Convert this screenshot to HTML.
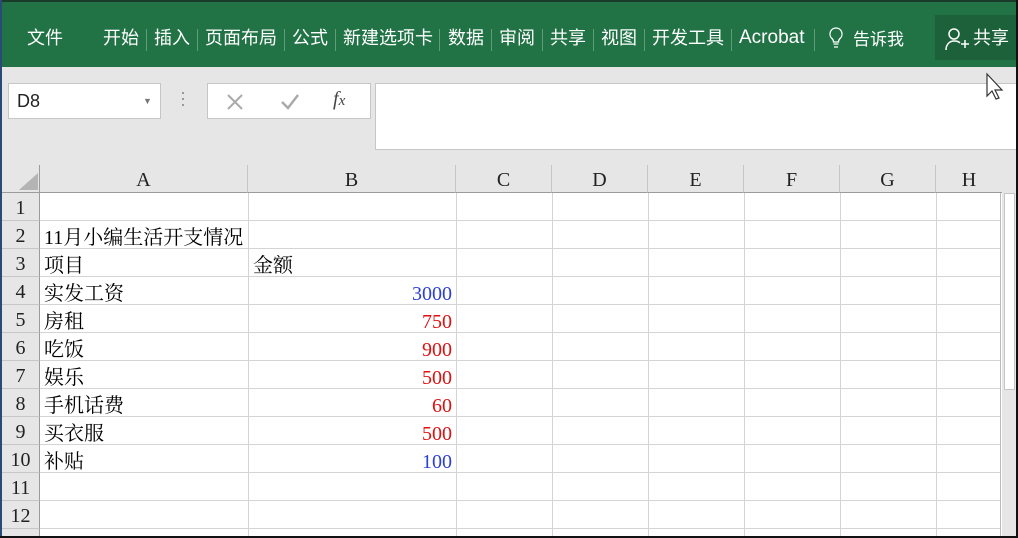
<!DOCTYPE html>
<html><head><meta charset="utf-8"><style>
*{margin:0;padding:0;box-sizing:border-box}
body{width:1018px;height:538px;overflow:hidden;background:#fff;position:relative;font-family:"Liberation Sans","Noto Sans CJK SC",sans-serif}
.a{position:absolute}
#rib{left:0;top:0;width:1018px;height:67px;background:#217346;border-top:2px solid #1a3a2a;border-left:2px solid #2a4a7a}
.t{position:absolute;top:24px;color:#fff;font-size:18px;line-height:24px;white-space:nowrap}
.sep{position:absolute;top:27px;width:1px;height:22px;background:#5f9c7a}
#fb{left:0;top:67px;width:1018px;height:98px;background:#e6e6e6;border-left:2px solid #2a4a7a}
.box{position:absolute;background:#fff;border:1px solid #c6c6c6}
.ch{position:absolute;top:165px;height:28px;background:#e6e6e6;border-right:1px solid #c6c6c6;border-bottom:1px solid #9b9b9b;font-family:"Liberation Serif",serif;font-size:20px;text-align:center;line-height:30px;color:#222}
.rh{position:absolute;left:2px;width:38px;height:28px;background:#e6e6e6;border-bottom:1px solid #c6c6c6;border-right:1px solid #9b9b9b;font-family:"Liberation Serif",serif;font-size:20px;text-align:center;line-height:30px;color:#222}
.hl{position:absolute;left:40px;width:960px;height:1px;background:#d4d4d4}
.vl{position:absolute;top:193px;width:1px;height:345px;background:#d4d4d4}
.c{position:absolute;font-family:"Liberation Serif","Noto Serif CJK SC",serif;font-size:20px;line-height:28px;white-space:nowrap;color:#000;margin-top:2px}
.n{text-align:right;width:200px;left:252px}
</style></head><body>
<div id="rib" class="a">
<div class="t" style="left:25px">文件</div>
<div class="t" style="left:101px">开始</div><div class="sep" style="left:144px"></div>
<div class="t" style="left:152px">插入</div><div class="sep" style="left:195px"></div>
<div class="t" style="left:203px">页面布局</div><div class="sep" style="left:282px"></div>
<div class="t" style="left:290px">公式</div><div class="sep" style="left:333px"></div>
<div class="t" style="left:341px">新建选项卡</div><div class="sep" style="left:437px"></div>
<div class="t" style="left:446px">数据</div><div class="sep" style="left:489px"></div>
<div class="t" style="left:497px">审阅</div><div class="sep" style="left:540px"></div>
<div class="t" style="left:548px">共享</div><div class="sep" style="left:591px"></div>
<div class="t" style="left:599px">视图</div><div class="sep" style="left:642px"></div>
<div class="t" style="left:650px">开发工具</div><div class="sep" style="left:729px"></div>
<div class="t" style="left:737px;font-size:19px">Acrobat</div><div class="sep" style="left:812px"></div>
<svg class="a" style="left:826px;top:24px" width="16" height="24" viewBox="0 0 16 24"><path d="M8 2a6 6 0 0 0-4 10.5c1 1 1.5 2 1.5 3.5h5c0-1.5.5-2.5 1.5-3.5A6 6 0 0 0 8 2zM5.5 18h5M6 21h4" fill="none" stroke="#fff" stroke-width="1.3"/></svg>
<div class="t" style="left:851px;top:26px;font-size:17px">告诉我</div>
<div class="a" style="left:933px;top:13px;width:85px;height:45px;background:#1c6139"></div>
<svg class="a" style="left:942px;top:24px" width="26" height="26" viewBox="0 0 26 26"><circle cx="10" cy="8" r="5" fill="none" stroke="#fff" stroke-width="1.5"/><path d="M2 24c0-6 4-9 8-9s5 1 6 2M17 18h8M21 14v8" fill="none" stroke="#fff" stroke-width="1.5"/></svg>
<div class="t" style="left:971px">共享</div>
</div>
<div id="fb" class="a">
<div class="box" style="left:6px;top:16px;width:153px;height:36px;font-size:18px;line-height:34px;padding-left:8px;color:#222">D8<span style="position:absolute;left:134px;top:0;font-size:9px;color:#777">▼</span></div>
<div class="a" style="left:180px;top:25px;width:2px;height:2px;background:#999;box-shadow:0 6px #999,0 12px #999"></div>
<div class="box" style="left:205px;top:16px;width:164px;height:36px">
<svg class="a" style="left:18px;top:9px" width="18" height="18"><path d="M2 2l14 14M16 2L2 16" stroke="#aaa" stroke-width="2"/></svg>
<svg class="a" style="left:72px;top:9px" width="20" height="18"><path d="M2 9l6 6L18 2" fill="none" stroke="#aaa" stroke-width="2.5"/></svg>
<div class="a" style="left:125px;top:4px;font-family:'Liberation Serif',serif;font-style:italic;font-size:20px;color:#444">f<span style="font-size:15px">x</span></div>
</div>
<div class="box" style="left:373px;top:16px;width:645px;height:67px;border-right:none"></div>
<svg class="a" style="left:983px;top:5px" width="20" height="30"><path d="M2 2v22l5-5 4 8 3-1-4-8h7z" fill="#fff" stroke="#333" stroke-width="1.2"/></svg>
</div>
<div class="a" style="left:2px;top:165px;width:38px;height:28px;background:#e6e6e6;border-right:1px solid #9b9b9b;border-bottom:1px solid #9b9b9b"><svg width="38" height="28"><path d="M17 25h19V8z" fill="#b4b4b4"/></svg></div>
<div class="ch" style="left:40px;width:208px">A</div>
<div class="ch" style="left:248px;width:208px">B</div>
<div class="ch" style="left:456px;width:96px">C</div>
<div class="ch" style="left:552px;width:96px">D</div>
<div class="ch" style="left:648px;width:96px">E</div>
<div class="ch" style="left:744px;width:96px">F</div>
<div class="ch" style="left:840px;width:96px">G</div>
<div class="ch" style="left:936px;width:66px;border-right:none">H</div>
<div class="a" style="left:1002px;top:165px;width:14px;height:373px;background:#e6e6e6"></div>
<div class="a" style="left:1004px;top:193px;width:11px;height:197px;background:#fff;border:1px solid #c6c6c6"></div>
<div class="vl" style="left:248px"></div><div class="vl" style="left:456px"></div><div class="vl" style="left:552px"></div><div class="vl" style="left:648px"></div><div class="vl" style="left:744px"></div><div class="vl" style="left:840px"></div><div class="vl" style="left:936px"></div><div class="vl" style="left:1000px;background:#bbb"></div>
<div class="hl" style="top:220px"></div><div class="hl" style="top:248px"></div><div class="hl" style="top:276px"></div><div class="hl" style="top:304px"></div><div class="hl" style="top:332px"></div><div class="hl" style="top:360px"></div><div class="hl" style="top:388px"></div><div class="hl" style="top:416px"></div><div class="hl" style="top:444px"></div><div class="hl" style="top:472px"></div><div class="hl" style="top:500px"></div><div class="hl" style="top:528px"></div>
<div class="rh" style="top:193px">1</div><div class="rh" style="top:221px">2</div><div class="rh" style="top:249px">3</div><div class="rh" style="top:277px">4</div><div class="rh" style="top:305px">5</div><div class="rh" style="top:333px">6</div><div class="rh" style="top:361px">7</div><div class="rh" style="top:389px">8</div><div class="rh" style="top:417px">9</div><div class="rh" style="top:445px">10</div><div class="rh" style="top:473px">11</div><div class="rh" style="top:501px">12</div><div class="rh" style="top:529px;height:7px;border-bottom:none"></div>
<div class="c" style="left:44px;top:222px">11月小编生活开支情况</div>
<div class="c" style="left:44px;top:250px">项目</div><div class="c" style="left:253px;top:250px">金额</div>
<div class="c" style="left:44px;top:278px">实发工资</div><div class="c n" style="top:278px;color:#2a3fd8">3000</div>
<div class="c" style="left:44px;top:306px">房租</div><div class="c n" style="top:306px;color:#e01010">750</div>
<div class="c" style="left:44px;top:334px">吃饭</div><div class="c n" style="top:334px;color:#e01010">900</div>
<div class="c" style="left:44px;top:362px">娱乐</div><div class="c n" style="top:362px;color:#e01010">500</div>
<div class="c" style="left:44px;top:390px">手机话费</div><div class="c n" style="top:390px;color:#e01010">60</div>
<div class="c" style="left:44px;top:418px">买衣服</div><div class="c n" style="top:418px;color:#e01010">500</div>
<div class="c" style="left:44px;top:446px">补贴</div><div class="c n" style="top:446px;color:#2a3fd8">100</div>
<div class="a" style="left:0;top:0;width:2px;height:538px;background:#2a4a7a"></div>
<div class="a" style="left:1016px;top:0;width:2px;height:538px;background:#111"></div>
<div class="a" style="left:0;top:536px;width:1018px;height:2px;background:#111"></div>
</body></html>
